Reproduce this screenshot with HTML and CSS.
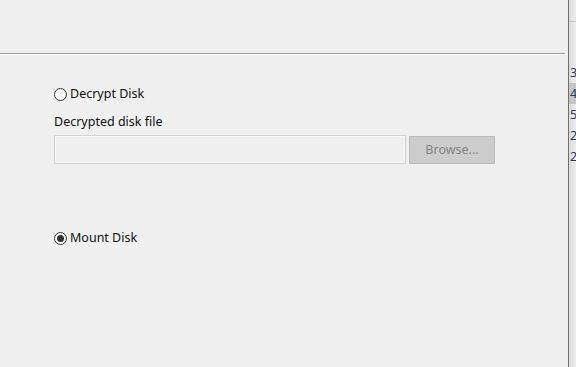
FILE: index.html
```html
<!DOCTYPE html>
<html lang="en">
<head>
  <meta charset="UTF-8">
  <title>Disk</title>
  <link rel="stylesheet" href="styles.css">
</head>
<body>
  <div class="window">
    <div class="main">
      <div class="header"></div>

      <div class="content">
        <label class="radio">
          <input type="radio" name="mode">
          <span class="dot"></span>
          <span>Decrypt Disk</span>
        </label>

        <div class="field-label">Decrypted disk file</div>
        <div class="file-row">
          <input class="file-input" type="text">
          <button class="browse" disabled>Browse...</button>
        </div>

        <label class="radio radio-mount">
          <input type="radio" name="mode" checked>
          <span class="dot"></span>
          <span>Mount Disk</span>
        </label>
      </div>
    </div>

    <div class="side">
      <div class="side-head"></div>
      <ul class="side-list">
        <li>3</li>
        <li class="active">4</li>
        <li>5</li>
        <li>2</li>
        <li>2</li>
      </ul>
    </div>
  </div>
</body>
</html>
```

FILE: styles.css
```css
html,
body {
  margin: 0;
  height: 100%;
  background: #f0f0f0;
}

body {
  font-family: "Noto Sans", "Open Sans", sans-serif;
  font-size: 12.5px;
  color: #111;
}

.window {
  display: flex;
  height: 100%;
}

.main {
  flex: 1;
}

.header {
  height: 53px;
  margin-right: 3px;
  border-bottom: 1px solid #a0a0a0;
  box-shadow: 0 1px 0 #fff;
}

.content {
  padding: 32px 0 0 54px;
}

.radio {
  display: flex;
  align-items: center;
  gap: 3px;
  height: 16px;
  line-height: 16px;
}

.radio input {
  display: none;
}

.radio .dot {
  box-sizing: border-box;
  width: 13px;
  height: 13px;
  border: 1px solid #333;
  border-radius: 50%;
  background: #fff;
  display: flex;
  align-items: center;
  justify-content: center;
}

.radio input:checked + .dot::before {
  content: '';
  width: 7px;
  height: 7px;
  border-radius: 50%;
  background: #333;
}

.field-label {
  margin-top: 12px;
  line-height: 16px;
}

.file-row {
  display: flex;
  align-items: center;
  gap: 3px;
  margin-top: 5px;
}

.file-input {
  box-sizing: border-box;
  width: 352px;
  height: 29px;
  margin: 0;
  border: 1px solid #d4d4d4;
  background: #f0f0f0;
  box-shadow: inset 0 0 0 1px #f7f7f7;
  outline: none;
}

.browse {
  box-sizing: border-box;
  width: 86px;
  height: 28px;
  margin: 0;
  border: 1px solid #bdbdbd;
  background: #cccccc;
  color: #858585;
  font-family: inherit;
  font-size: 12.5px;
}

.radio-mount {
  margin-top: 66px;
}

.side {
  width: 7px;
  border-left: 1px solid #6e6e6e;
  background: linear-gradient(to right, #dcdcdc, #ececec);
  overflow: hidden;
}

.side-head {
  height: 21px;
  border-bottom: 1px solid #c4c4c4;
}

.side-list {
  list-style: none;
  margin: 40px 0 0;
  padding: 0;
}

.side-list li {
  height: 21px;
  line-height: 21px;
  color: #2b3a55;
  text-indent: 1px;
}

.side-list li.active {
  background: #c6c6c6;
}
```
